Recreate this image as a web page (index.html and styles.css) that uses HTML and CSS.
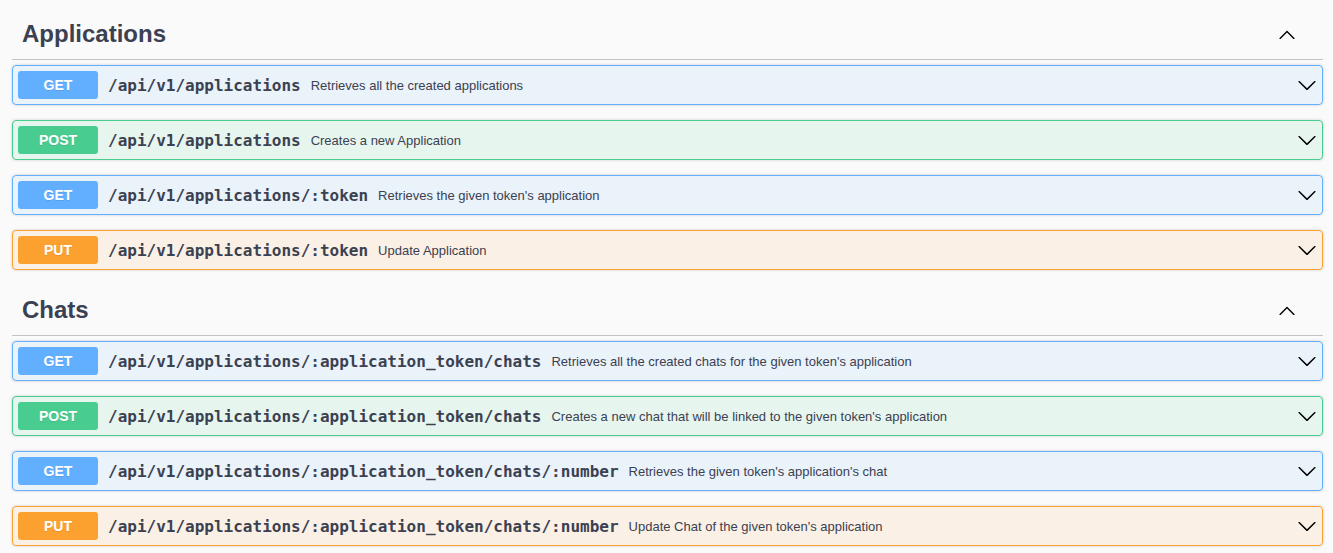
FILE: index.html
```html
<!DOCTYPE html>
<html>
<head>
<meta charset="utf-8">
<link rel="stylesheet" href="styles.css">
<title>API</title>
</head>
<body>
<svg width="0" height="0" class="defs">
  <defs>
    <symbol id="arrow-up" viewBox="0 0 20 20"><path d="M17.418 14.908c-.27.27-.707.27-.977 0L10 8.468l-6.44 6.44c-.27.27-.707.27-.977 0s-.27-.708 0-.978l6.93-6.93c.27-.27.707-.27.977 0l6.93 6.93c.27.27.27.707 0 .978z"/></symbol>
    <symbol id="arrow-down" viewBox="0 0 20 20"><path d="M17.418 6.109c.272-.268.709-.268.979 0s.271.701 0 .969l-7.908 7.83c-.27.268-.707.268-.979 0l-7.908-7.830c-.27-.268-.27-.701 0-.969.271-.268.709-.268.979 0L10 13.25l7.418-7.141z"/></symbol>
  </defs>
</svg>
<div class="wrapper">
  <section class="tag-section">
    <h3 class="tag"><span class="tag-name">Applications</span><button class="expand"><svg class="arrow"><use href="#arrow-up"/></svg></button></h3>
    <div class="op get"><span class="method">GET</span><span class="path">/api/v1/applications</span><span class="desc">Retrieves all the created applications</span><svg class="arrow chev"><use href="#arrow-down"/></svg></div>
    <div class="op post"><span class="method">POST</span><span class="path">/api/v1/applications</span><span class="desc">Creates a new Application</span><svg class="arrow chev"><use href="#arrow-down"/></svg></div>
    <div class="op get"><span class="method">GET</span><span class="path">/api/v1/applications/:token</span><span class="desc">Retrieves the given token's application</span><svg class="arrow chev"><use href="#arrow-down"/></svg></div>
    <div class="op put"><span class="method">PUT</span><span class="path">/api/v1/applications/:token</span><span class="desc">Update Application</span><svg class="arrow chev"><use href="#arrow-down"/></svg></div>
  </section>
  <section class="tag-section">
    <h3 class="tag"><span class="tag-name">Chats</span><button class="expand"><svg class="arrow"><use href="#arrow-up"/></svg></button></h3>
    <div class="op get"><span class="method">GET</span><span class="path">/api/v1/applications/:application_token/chats</span><span class="desc">Retrieves all the created chats for the given token's application</span><svg class="arrow chev"><use href="#arrow-down"/></svg></div>
    <div class="op post"><span class="method">POST</span><span class="path">/api/v1/applications/:application_token/chats</span><span class="desc">Creates a new chat that will be linked to the given token's application</span><svg class="arrow chev"><use href="#arrow-down"/></svg></div>
    <div class="op get"><span class="method">GET</span><span class="path">/api/v1/applications/:application_token/chats/:number</span><span class="desc">Retrieves the given token's application's chat</span><svg class="arrow chev"><use href="#arrow-down"/></svg></div>
    <div class="op put"><span class="method">PUT</span><span class="path">/api/v1/applications/:application_token/chats/:number</span><span class="desc">Update Chat of the given token's application</span><svg class="arrow chev"><use href="#arrow-down"/></svg></div>
  </section>
</div>
</body>
</html>
```
FILE: styles.css
```css
html, body {
  margin: 0;
  padding: 0;
  background: #fafafa;
  font-family: "Liberation Sans", Arial, sans-serif;
  color: #3b4151;
  overflow: hidden;
}
.defs { position: absolute; width: 0; height: 0; }
.wrapper {
  padding: 9px 10px 0 12px;
}
.tag {
  display: flex;
  align-items: center;
  margin: 0 0 5px;
  padding: 10px 20px 10px 10px;
  height: 30px;
  border-bottom: 1px solid rgba(59, 65, 81, 0.3);
  font-size: 24px;
  font-weight: 700;
  color: #3b4151;
}
.tag-name { flex: 1; }
.expand {
  border: none;
  background: none;
  padding: 0 6px;
  display: flex;
  cursor: pointer;
}
.arrow {
  width: 20px;
  height: 20px;
  fill: #000;
}
.op {
  display: flex;
  align-items: center;
  padding: 5px;
  margin: 0 0 15px;
  border: 1px solid;
  border-radius: 4px;
  box-shadow: 0 0 3px rgba(0, 0, 0, 0.19);
}
.get { background: rgba(97, 175, 254, 0.1); border-color: #61affe; }
.post { background: rgba(73, 204, 144, 0.1); border-color: #49cc90; }
.put { background: rgba(252, 161, 48, 0.1); border-color: #fca130; }
.method {
  min-width: 80px;
  padding: 6px 0;
  height: 16px;
  line-height: 16px;
  font-size: 14px;
  font-weight: 700;
  text-align: center;
  color: #fff;
  border-radius: 3px;
  text-shadow: 0 1px 0 rgba(0, 0, 0, 0.1);
}
.get .method { background: #61affe; }
.post .method { background: #49cc90; }
.put .method { background: #fca130; }
.path {
  padding: 0 10px;
  font-family: "DejaVu Sans Mono", monospace;
  font-size: 16px;
  font-weight: 700;
  color: #3b4151;
}
.desc {
  flex: 1;
  font-size: 13px;
  color: #3b4151;
}
.chev { flex: none; }
```
